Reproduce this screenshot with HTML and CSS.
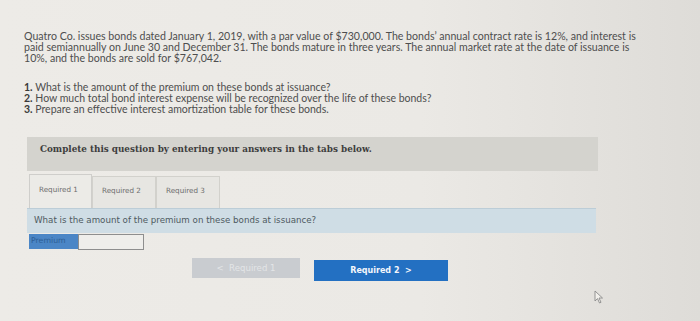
FILE: index.html
```html
<!DOCTYPE html>
<html>
<head>
<meta charset="utf-8">
<link rel="stylesheet" href="styles.css">
</head>
<body>
<div class="page">
  <p class="intro">Quatro Co. issues bonds dated January 1, 2019, with a par value of $730,000. The bonds’ annual contract rate is 12%, and interest is<br>paid semiannually on June 30 and December 31. The bonds mature in three years. The annual market rate at the date of issuance is<br>10%, and the bonds are sold for $767,042.</p>
  <ol class="reqs">
    <li><b>1.</b> What is the amount of the premium on these bonds at issuance?</li>
    <li><b>2.</b> How much total bond interest expense will be recognized over the life of these bonds?</li>
    <li><b>3.</b> Prepare an effective interest amortization table for these bonds.</li>
  </ol>
  <div class="banner">Complete this question by entering your answers in the tabs below.</div>
  <div class="tabs">
    <div class="tab active">Required 1</div>
    <div class="tab">Required 2</div>
    <div class="tab">Required 3</div>
  </div>
  <div class="question">What is the amount of the premium on these bonds at issuance?</div>
  <div class="answer">
    <span class="label">Premium</span>
    <span class="input"></span>
  </div>
  <div class="nav">
    <span class="btn prev">&lt;&nbsp; Required 1</span>
    <span class="btn next">Required 2 &nbsp;&gt;</span>
  </div>
  <svg class="cursor" width="10" height="14" viewBox="0 0 10 14"><path d="M1 1 L1 11 L3.5 8.6 L5.5 13 L7 12.3 L5 8 L8.5 8 Z" fill="#f2f0ec" stroke="#8a8a8a" stroke-width="0.9"/></svg>
</div>
</body>
</html>
```
FILE: styles.css
```css
html, body {
  margin: 0;
  padding: 0;
}
body {
  width: 700px;
  height: 321px;
  overflow: hidden;
  background: linear-gradient(90deg, #edebe7 0%, #ebe9e5 60%, #dedcd8 100%);
}
.page {
  position: relative;
  height: 321px;
  padding: 31px 0 0 24px;
  box-sizing: border-box;
  font-family: Lato, "Liberation Sans", sans-serif;
  color: #4e4e4e;
}
.intro {
  margin: 0;
  white-space: nowrap;
  font-size: 10.6px;
  line-height: 11px;
}
.reqs {
  list-style: none;
  margin: 18px 0 0 0;
  padding: 0;
  font-size: 10.5px;
  line-height: 11px;
}
.reqs b {
  color: #3a3a3a;
}
.banner {
  margin: 22px 0 0 3px;
  width: 571px;
  height: 34px;
  box-sizing: border-box;
  padding: 7px 0 0 13px;
  background: #d4d3ce;
  font-family: "DejaVu Serif", serif;
  font-weight: bold;
  font-size: 8.8px;
  color: #3d3d3d;
}
.tabs {
  display: flex;
  margin: 3px 0 0 5px;
  height: 34px;
  align-items: flex-end;
}
.tab {
  font-family: "DejaVu Sans", sans-serif;
  font-size: 7.2px;
  color: #6d6d6d;
  height: 32px;
  box-sizing: border-box;
  padding: 9px 0 0 9px;
  border: 1px solid #d2d1cc;
  border-bottom: none;
  background: #e7e6e2;
  width: 64px;
}
.tab.active {
  height: 34px;
  width: 63px;
  padding-top: 10px;
  background: #ecebe7;
  border-color: #cfcecb;
}
.question {
  margin: 0 0 0 3px;
  width: 569px;
  height: 25px;
  box-sizing: border-box;
  padding: 6px 0 0 7px;
  background: #cfdde5;
  border-top: 1px solid #bccdd7;
  font-family: "DejaVu Sans", sans-serif;
  font-size: 8.7px;
  color: #4e5a61;
}
.answer {
  display: flex;
  margin: 1px 0 0 5px;
  height: 16px;
}
.label {
  width: 49px;
  box-sizing: border-box;
  background: #4b86c6;
  color: #2d5e94;
  font-family: "DejaVu Sans", sans-serif;
  font-size: 7.8px;
  padding: 2px 0 0 2px;
  height: 15px;
}
.input {
  width: 66px;
  height: 16px;
  box-sizing: border-box;
  border: 1px solid #8e8e8e;
  background: #efeeeb;
}
.nav {
  display: flex;
  gap: 14px;
  margin: 8px 0 0 168px;
  align-items: flex-start;
}
.btn {
  display: flex;
  align-items: center;
  justify-content: center;
  box-sizing: border-box;
  font-family: "DejaVu Sans", sans-serif;
  font-size: 8px;
}
.prev {
  width: 108px;
  height: 20px;
  background: #c9ccd0;
  color: #e3e5e7;
  font-size: 8.6px;
}
.next {
  width: 134px;
  height: 21px;
  margin-top: 2px;
  background: #2370c2;
  color: #f3f6fb;
  font-weight: bold;
}
.cursor {
  position: absolute;
  left: 594px;
  top: 290px;
}
```
